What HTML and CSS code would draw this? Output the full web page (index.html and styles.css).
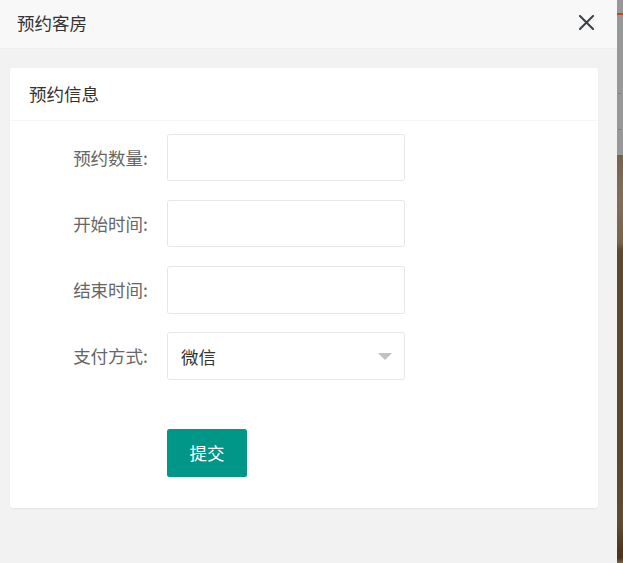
FILE: index.html
```html
<!DOCTYPE html>
<html lang="zh-CN">
<head>
<meta charset="utf-8">
<title>预约客房</title>
<link rel="stylesheet" href="styles.css">
</head>
<body>
<div class="page">
  <div class="layer">
    <div class="layer-title">
      <span class="title-text">预约客房</span>
      <span class="close" aria-label="关闭">
        <svg width="15" height="15" viewBox="0 0 15 15"><path d="M1 1 L14 14 M14 1 L1 14" stroke="#3d4048" stroke-width="2" stroke-linecap="square" fill="none"/></svg>
      </span>
    </div>
    <div class="layer-content">
      <div class="card">
        <div class="card-header">预约信息</div>
        <div class="card-body">
          <form class="form">
            <div class="form-item">
              <label class="label">预约数量:</label>
              <div class="input"></div>
            </div>
            <div class="form-item">
              <label class="label">开始时间:</label>
              <div class="input"></div>
            </div>
            <div class="form-item">
              <label class="label">结束时间:</label>
              <div class="input"></div>
            </div>
            <div class="form-item">
              <label class="label">支付方式:</label>
              <div class="input select"><span class="select-value">微信</span><i class="edge"></i></div>
            </div>
            <div class="form-item btn-row">
              <button type="button" class="btn">提交</button>
            </div>
          </form>
        </div>
      </div>
    </div>
  </div>
  <div class="backdrop">
    <div class="bg-top">
      <div class="bg-line"></div>
      <div class="bg-mark mark1"></div>
      <div class="bg-mark mark2"></div>
    </div>
    <div class="bg-photo"></div>
  </div>
</div>
</body>
</html>
```

FILE: styles.css
```css
html, body {
  margin: 0;
  padding: 0;
  height: 563px;
  overflow: hidden;
}
body {
  font-family: "Microsoft YaHei", "Noto Sans CJK SC", "Noto Sans", sans-serif;
  color: #333;
  background: #f2f2f2;
}
.page {
  display: flex;
  height: 563px;
}
.layer {
  width: 617px;
  flex: none;
  background: #f2f2f2;
  display: flex;
  flex-direction: column;
}
.layer-title {
  height: 48px;
  background: #f8f8f8;
  border-bottom: 1px solid #eee;
  display: flex;
  align-items: center;
  justify-content: space-between;
  padding: 0 23px 0 17px;
  font-size: 17.5px;
  color: #333;
}
.title-text {
  line-height: 48px;
  margin-top: -2px;
}
.close {
  display: flex;
  width: 15px;
  height: 15px;
  margin-bottom: 3px;
}
.layer-content {
  padding: 19px 19px 0 10px;
}
.card {
  background: #fff;
  border-radius: 3px;
  box-shadow: 0 1px 2px 0 rgba(0, 0, 0, 0.06);
}
.card-header {
  height: 52px;
  line-height: 52px;
  padding: 0 19px;
  border-bottom: 1px solid #f6f6f6;
  font-size: 17.5px;
  color: #333;
}
.card-body {
  padding: 12.5px 12.5px 12.5px 12.5px;
}
.form {
  display: flex;
  flex-direction: column;
}
.form-item {
  display: flex;
  align-items: center;
  margin-bottom: 18.75px;
}
.label {
  width: 125.5px;
  margin-right: 19px;
  text-align: right;
  font-size: 17.5px;
  line-height: 47.5px;
  color: #666;
}
.input {
  box-sizing: border-box;
  width: 238px;
  height: 47.5px;
  border: 1px solid #e6e6e6;
  border-radius: 2.5px;
  background: #fff;
}
.select {
  display: flex;
  align-items: center;
  justify-content: space-between;
  padding: 0 12px 0 13px;
}
.select-value {
  font-size: 17.5px;
  color: #333;
  line-height: 47px;
  margin-top: 1px;
}
.edge {
  width: 0;
  height: 0;
  border-left: 7.5px solid transparent;
  border-right: 7.5px solid transparent;
  border-top: 7.5px solid #c2c2c2;
  margin-top: 1px;
}
.btn-row {
  margin-top: 30px;
  padding-left: 144.5px;
}
.btn {
  width: 80px;
  height: 48px;
  border: none;
  border-radius: 2.5px;
  background: #009688;
  color: #fff;
  font-family: inherit;
  font-size: 17.5px;
  padding: 0;
  cursor: pointer;
}
.backdrop {
  flex: 1;
  display: flex;
  flex-direction: column;
}
.bg-top {
  height: 155px;
  background: #989898;
  position: relative;
}
.bg-line {
  position: absolute;
  left: 0;
  right: 0;
  top: 13px;
  height: 2px;
  background: #c4451c;
}
.bg-mark {
  position: absolute;
  left: 1px;
  width: 3px;
  height: 1px;
  background: #7d7d7d;
}
.mark1 { top: 93px; }
.mark2 { top: 129px; }
.bg-photo {
  flex: 1;
  background: linear-gradient(to bottom, #75614c 0, #7b6a58 25px, #806e5b 45px, #77634e 88px, #5e4833 95px, #5c4733 300px, #5e4a35 370px, #4e3520 395px, #4a321d 403px, #7a6650 408px);
}
```
